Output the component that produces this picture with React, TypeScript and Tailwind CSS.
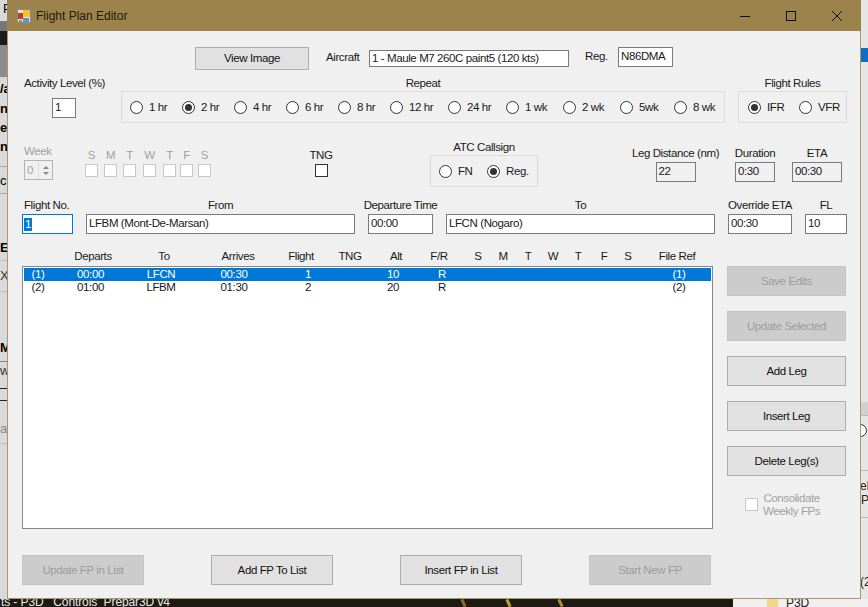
import { clsx } from "clsx";

const repeatOptions = [
  { label: "1 hr", width: "w-[52px]" },
  { label: "2 hr", width: "w-[52px]", checked: true },
  { label: "4 hr", width: "w-[52px]" },
  { label: "6 hr", width: "w-[52px]" },
  { label: "8 hr", width: "w-[52px]" },
  { label: "12 hr", width: "w-[58px]" },
  { label: "24 hr", width: "w-[58px]" },
  { label: "1 wk", width: "w-[57px]" },
  { label: "2 wk", width: "w-[57px]" },
  { label: "5wk", width: "w-[54px]" },
  { label: "8 wk", width: "w-[44px]" },
];

const days = [
  { label: "S", margin: "" },
  { label: "M", margin: "ml-[6px]" },
  { label: "T", margin: "ml-[6px]" },
  { label: "W", margin: "ml-[7px]" },
  { label: "T", margin: "ml-[7px]" },
  { label: "F", margin: "ml-[4px]" },
  { label: "S", margin: "ml-[5px]" },
];

const headerCols =
  "grid-cols-[30px_80px_62px_86px_40px_58px_34px_52px_26px_24px_26px_24px_26px_26px_22px_76px]";
const rowCols = "grid-cols-[28px_77px_64px_82px_66px_20px_64px_34px_27px_27px_27px_27px_27px_28px_28px_58px]";

const headers = ["", "Departs", "To", "Arrives", "Flight", "TNG", "Alt", "F/R", "S", "M", "T", "W", "T", "F", "S", "File Ref"];

const legs = [
  ["(1)", "00:00", "LFCN", "00:30", "1", "", "10", "R", "", "", "", "", "", "", "", "(1)"],
  ["(2)", "01:00", "LFBM", "01:30", "2", "", "20", "R", "", "", "", "", "", "", "", "(2)"],
];

function Radio({ label, checked, className }: { label: string; checked?: boolean; className?: string }) {
  return (
    <div className={clsx("flex shrink-0 items-center gap-[6px]", className)}>
      <span className="flex h-[13px] w-[13px] shrink-0 items-center justify-center rounded-full border border-[#333] bg-white">
        {checked && <span className="h-[7px] w-[7px] rounded-full bg-[#333]" />}
      </span>
      <span>{label}</span>
    </div>
  );
}

function Field({ value, className, disabled }: { value: string; className?: string; disabled?: boolean }) {
  return (
    <div
      className={clsx(
        "flex items-center overflow-hidden whitespace-nowrap border border-[#7a7a7a] pl-[2px] leading-none",
        disabled ? "bg-[#f0f0f0]" : "bg-white",
        className,
      )}
    >
      {value}
    </div>
  );
}

function FormButton({ label, disabled, className }: { label: string; disabled?: boolean; className?: string }) {
  return (
    <button
      className={clsx(
        "flex items-center justify-center border",
        disabled ? "border-[#c4c4c4] bg-[#cccccc] text-[#9c9c9c]" : "border-[#adadad] bg-[#e1e1e1] text-[#111]",
        className,
      )}
    >
      {label}
    </button>
  );
}

function Background() {
  return (
    <>
      <div className="absolute left-0 top-0 h-[599px] w-[8px] overflow-hidden bg-[#d9d9d9] text-[13px] leading-none tracking-normal text-black">
        <span className="absolute left-[3px] top-[2px]">P</span>
        <div className="absolute left-0 top-[21px] h-[10px] w-full bg-[#777]" />
        <div className="absolute left-0 top-[31px] h-[14px] w-full bg-[#1b1b1b]" />
        <div className="absolute left-0 top-[45px] h-[32px] w-full bg-[#8c8c8c]" />
        <span className="absolute left-0 top-[82px] font-bold">/a</span>
        <span className="absolute left-0 top-[102px] font-bold">n</span>
        <span className="absolute left-0 top-[121px] font-bold">e</span>
        <span className="absolute left-0 top-[140px] font-bold">n</span>
        <div className="absolute left-0 top-[166px] h-px w-full bg-[#aaa]" />
        <span className="absolute left-0 top-[174px]">c</span>
        <div className="absolute left-0 top-[193px] h-px w-full bg-[#aaa]" />
        <span className="absolute left-0 top-[241px] font-bold">E</span>
        <div className="absolute left-0 top-[260px] h-px w-full bg-[#bbb]" />
        <span className="absolute left-0 top-[269px] text-[#333]">X</span>
        <div className="absolute left-0 top-[291px] h-px w-full bg-[#bbb]" />
        <span className="absolute left-0 top-[341px] font-bold">M</span>
        <div className="absolute left-0 top-[361px] h-px w-full bg-[#888]" />
        <span className="absolute left-0 top-[364px] text-[#333]">w</span>
        <div className="absolute left-0 top-[388px] h-px w-full bg-[#222]" />
        <div className="absolute left-0 top-[400px] h-px w-full bg-[#222]" />
        <span className="absolute left-0 top-[422px] text-[#888]">a</span>
        <div className="absolute left-0 top-[443px] h-px w-full bg-[#bbb]" />
      </div>
      <div className="absolute left-[860px] top-0 h-[599px] w-[8px] overflow-hidden bg-[#e6e6e6] text-[12px] leading-none tracking-normal text-[#222]">
        <div className="absolute left-0 top-[48px] h-[14px] w-full bg-[#0f6fc6]" />
        <div className="absolute left-0 top-[402px] h-[13px] w-full bg-[#d0d0d0]" />
        <div className="absolute left-0 top-[415px] h-px w-full bg-[#bbb]" />
        <div className="absolute left-[-6px] top-[424px] h-[13px] w-[13px] rounded-full border border-[#333] bg-white" />
        <div className="absolute left-0 top-[470px] h-px w-full bg-[#bbb]" />
        <span className="absolute left-0 top-[480px]">el</span>
        <span className="absolute left-[1px] top-[494px]">P</span>
        <div className="absolute left-0 top-[517px] h-px w-full bg-[#bbb]" />
        <span className="absolute left-0 top-[576px]">(2</span>
      </div>
      <div className="absolute left-0 top-[599px] flex h-[8px] w-[868px] overflow-hidden bg-[#1d1a14] text-[12px] leading-none tracking-[-0.1px]">
        <span className="ml-[1px] mt-[-3px] whitespace-pre text-[#e8e8e8]">ts - P3D   Controls  Prepar3D v4</span>
        <div className="absolute left-[462px] top-0 h-[8px] w-[3px] rotate-[-25deg] bg-[#8a6c2c]" />
        <div className="absolute left-[507px] top-0 h-[8px] w-[3px] rotate-[-25deg] bg-[#c89a35]" />
        <div className="absolute left-[559px] top-0 h-[8px] w-[3px] rotate-[-25deg] bg-[#b8892e]" />
        <div className="absolute left-[733px] top-0 h-[8px] w-[135px] bg-[#efefef]">
          <div className="absolute left-[34px] top-0 h-[8px] w-[11px] bg-[#f0d68a]" />
          <span className="absolute left-[53px] top-[-2px] text-[#222]">P3D</span>
        </div>
      </div>
    </>
  );
}

export default function App() {
  return (
    <div className="relative h-[607px] w-[868px] overflow-hidden bg-[#d9d9d9] font-['Liberation_Sans',Arial,sans-serif] text-[11.5px] leading-[13px] tracking-[-0.4px] text-[#1a1a1a]">
      <Background />
      <div className="absolute left-[7px] top-0 flex h-[599px] w-[854px] flex-col border-x border-b border-[#a89a6c] bg-[#f0f0f0]">
        <div className="-mx-px flex h-[31px] shrink-0 items-center bg-[#9c834b]">
          <svg className="ml-[10px] h-[14px] w-[14px]" viewBox="0 0 14 14">
            <rect x="0.5" y="0.5" width="13" height="13" fill="#e9e4d2" stroke="#8a8a8a" />
            <rect x="1" y="4" width="5" height="6" fill="#c8382c" />
            <rect x="6" y="1" width="7" height="7" fill="#f4c430" />
            <rect x="6" y="9" width="6" height="4" fill="#5b8fd6" />
            <rect x="2" y="11" width="3" height="2" fill="#6ea36e" />
          </svg>
          <span className="ml-[5px] mt-px text-[12px] tracking-normal text-[#1c1a12]">Flight Plan Editor</span>
          <div className="ml-auto mr-px flex h-full">
            <div className="flex w-[46px] items-center justify-center">
              <svg className="h-[10px] w-[10px]" viewBox="0 0 10 10">
                <path d="M0 5.5H10" stroke="#111" fill="none" />
              </svg>
            </div>
            <div className="flex w-[46px] items-center justify-center">
              <svg className="h-[10px] w-[10px]" viewBox="0 0 10 10">
                <rect x="0.5" y="0.5" width="9" height="9" stroke="#111" fill="none" />
              </svg>
            </div>
            <div className="flex w-[46px] items-center justify-center">
              <svg className="h-[10px] w-[10px]" viewBox="0 0 10 10">
                <path d="M0 0L10 10M10 0L0 10" stroke="#111" fill="none" />
              </svg>
            </div>
          </div>
        </div>

        <div className="flex flex-col pl-[14px]">
          <div className="ml-[173px] mt-[16px] flex h-[23px] items-start">
            <FormButton label="View Image" className="h-[23px] w-[114px]" />
            <span className="ml-[17px] mt-[4px] w-[43px]">Aircraft</span>
            <Field value="1 - Maule M7 260C paint5 (120 kts)" className="mt-[3px] h-[17px] w-[200px]" />
            <span className="ml-[16px] mt-[3px] w-[33px]">Reg.</span>
            <Field value="N86DMA" className="h-[20px] w-[55px]" />
          </div>

          <div className="mt-[7px] flex items-start">
            <div className="flex w-[99px] flex-col">
              <span className="ml-[2px] whitespace-nowrap">Activity Level (%)</span>
              <Field value="1" className="ml-[30px] mt-[8px] h-[20px] w-[24px]" />
            </div>
            <div className="flex w-[604px] flex-col">
              <span className="text-center">Repeat</span>
              <div className="mt-px flex h-[32px] items-center border border-[#dcdcdc] pl-[8px]">
                {repeatOptions.map((option) => (
                  <Radio key={option.label} label={option.label} checked={option.checked} className={option.width} />
                ))}
              </div>
            </div>
            <div className="ml-[13px] flex w-[109px] flex-col">
              <span className="text-center">Flight Rules</span>
              <div className="mt-px flex h-[32px] items-center border border-[#dcdcdc] pl-[9px]">
                <Radio label="IFR" checked className="w-[51px]" />
                <Radio label="VFR" />
              </div>
            </div>
          </div>

          <div className="mt-[18px] flex h-[46px] items-start">
            <div className="ml-[2px] mt-[4px] flex w-[61px] flex-col text-[#a0a0a0]">
              <span>Week</span>
              <div className="mt-[2px] flex h-[20px] w-[29px] items-center justify-between border border-[#b4b4b4] bg-[#f0f0f0] pl-[2px]">
                <span>0</span>
                <span className="flex h-full w-[14px] flex-col items-center justify-center gap-[3px] border-l border-[#dcdcdc]">
                  <span className="h-0 w-0 border-x-[3px] border-b-[3px] border-x-transparent border-b-[#888]" />
                  <span className="h-0 w-0 border-x-[3px] border-t-[3px] border-x-transparent border-t-[#888]" />
                </span>
              </div>
            </div>
            <div className="mt-[8px] flex w-[224px] text-[#a0a0a0]">
              {days.map((day, index) => (
                <div key={index} className={clsx("flex w-[13px] flex-col items-center", day.margin)}>
                  <span>{day.label}</span>
                  <span className="mt-[2px] h-[13px] w-[13px] shrink-0 border border-[#c8c8c8] bg-white" />
                </div>
              ))}
            </div>
            <div className="ml-[-3px] mt-[8px] flex w-[30px] flex-col items-center">
              <span>TNG</span>
              <span className="mt-[2px] h-[13px] w-[13px] border border-[#333] bg-white" />
            </div>
            <div className="ml-[94px] flex w-[108px] flex-col">
              <span className="text-center">ATC Callsign</span>
              <div className="mt-px flex h-[32px] items-center border border-[#dcdcdc] pl-[8px]">
                <Radio label="FN" className="w-[48px]" />
                <Radio label="Reg." checked />
              </div>
            </div>
            <div className="ml-[94px] mt-[6px] flex w-[87px] flex-col items-center">
              <span className="whitespace-nowrap">Leg Distance (nm)</span>
              <Field value="22" disabled className="mt-[2px] h-[20px] w-[40px]" />
            </div>
            <div className="ml-[16px] mt-[6px] flex w-[40px] flex-col items-center">
              <span>Duration</span>
              <Field value="0:30" disabled className="mt-[2px] h-[20px] w-[40px]" />
            </div>
            <div className="ml-[17px] mt-[6px] flex w-[50px] flex-col items-center">
              <span>ETA</span>
              <Field value="00:30" disabled className="mt-[2px] h-[20px] w-[50px]" />
            </div>
          </div>

          <div className="mt-[12px] flex items-start">
            <div className="flex w-[51px] flex-col">
              <span className="ml-[2px] whitespace-nowrap">Flight No.</span>
              <div className="mt-[2px] flex h-[20px] items-center border border-[#0078d7] bg-white pl-px">
                <span className="bg-[#0078d7] px-px text-white">1</span>
              </div>
            </div>
            <div className="ml-[13px] flex w-[269px] flex-col">
              <span className="text-center">From</span>
              <Field value="LFBM (Mont-De-Marsan)" className="mt-[2px] h-[20px]" />
            </div>
            <div className="ml-[13px] flex w-[65px] flex-col">
              <span className="-mx-[10px] whitespace-nowrap text-center">Departure Time</span>
              <Field value="00:00" className="mt-[2px] h-[20px]" />
            </div>
            <div className="ml-[13px] flex w-[269px] flex-col">
              <span className="text-center">To</span>
              <Field value="LFCN (Nogaro)" className="mt-[2px] h-[20px]" />
            </div>
            <div className="ml-[13px] flex w-[64px] flex-col">
              <span className="whitespace-nowrap text-center">Override ETA</span>
              <Field value="00:30" className="mt-[2px] h-[20px]" />
            </div>
            <div className="ml-[13px] flex w-[42px] flex-col">
              <span className="text-center">FL</span>
              <Field value="10" className="mt-[2px] h-[20px]" />
            </div>
          </div>

          <div className="mt-[16px] flex items-start">
            <div className="flex w-[691px] flex-col">
              <div className={clsx("ml-px grid h-[16px]", headerCols)}>
                {headers.map((header, index) => (
                  <span key={index} className="whitespace-nowrap text-center">
                    {header}
                  </span>
                ))}
              </div>
              <div className="h-[263px] border border-[#828790] bg-white p-px">
                {legs.map((leg, rowIndex) => (
                  <div
                    key={rowIndex}
                    className={clsx("grid h-[13px]", rowCols, rowIndex === 0 && "bg-[#0078d7] text-white")}
                  >
                    {leg.map((cell, cellIndex) => (
                      <span key={cellIndex} className="text-center">
                        {cell}
                      </span>
                    ))}
                  </div>
                ))}
              </div>
            </div>
            <div className="ml-[14px] flex w-[119px] flex-col gap-[15px] pt-[16px]">
              <FormButton label="Save Edits" disabled className="h-[30px]" />
              <FormButton label="Update Selected" disabled className="h-[30px]" />
              <FormButton label="Add Leg" className="h-[30px]" />
              <FormButton label="Insert Leg" className="h-[30px]" />
              <FormButton label="Delete Leg(s)" className="h-[30px]" />
              <div className="flex items-center gap-[5px] pl-[18px] text-[#a0a0a0]">
                <span className="h-[13px] w-[13px] shrink-0 border border-[#c8c8c8] bg-white" />
                <span className="pt-px text-center">
                  Consolidate
                  <br />
                  Weekly FPs
                </span>
              </div>
            </div>
          </div>

          <div className="mt-[26px] flex gap-[67px]">
            <FormButton label="Update FP in List" disabled className="h-[30px] w-[122px]" />
            <FormButton label="Add FP To List" className="h-[30px] w-[122px]" />
            <FormButton label="Insert FP in List" className="h-[30px] w-[122px]" />
            <FormButton label="Start New FP" disabled className="h-[30px] w-[122px]" />
          </div>
        </div>
      </div>
    </div>
  );
}
